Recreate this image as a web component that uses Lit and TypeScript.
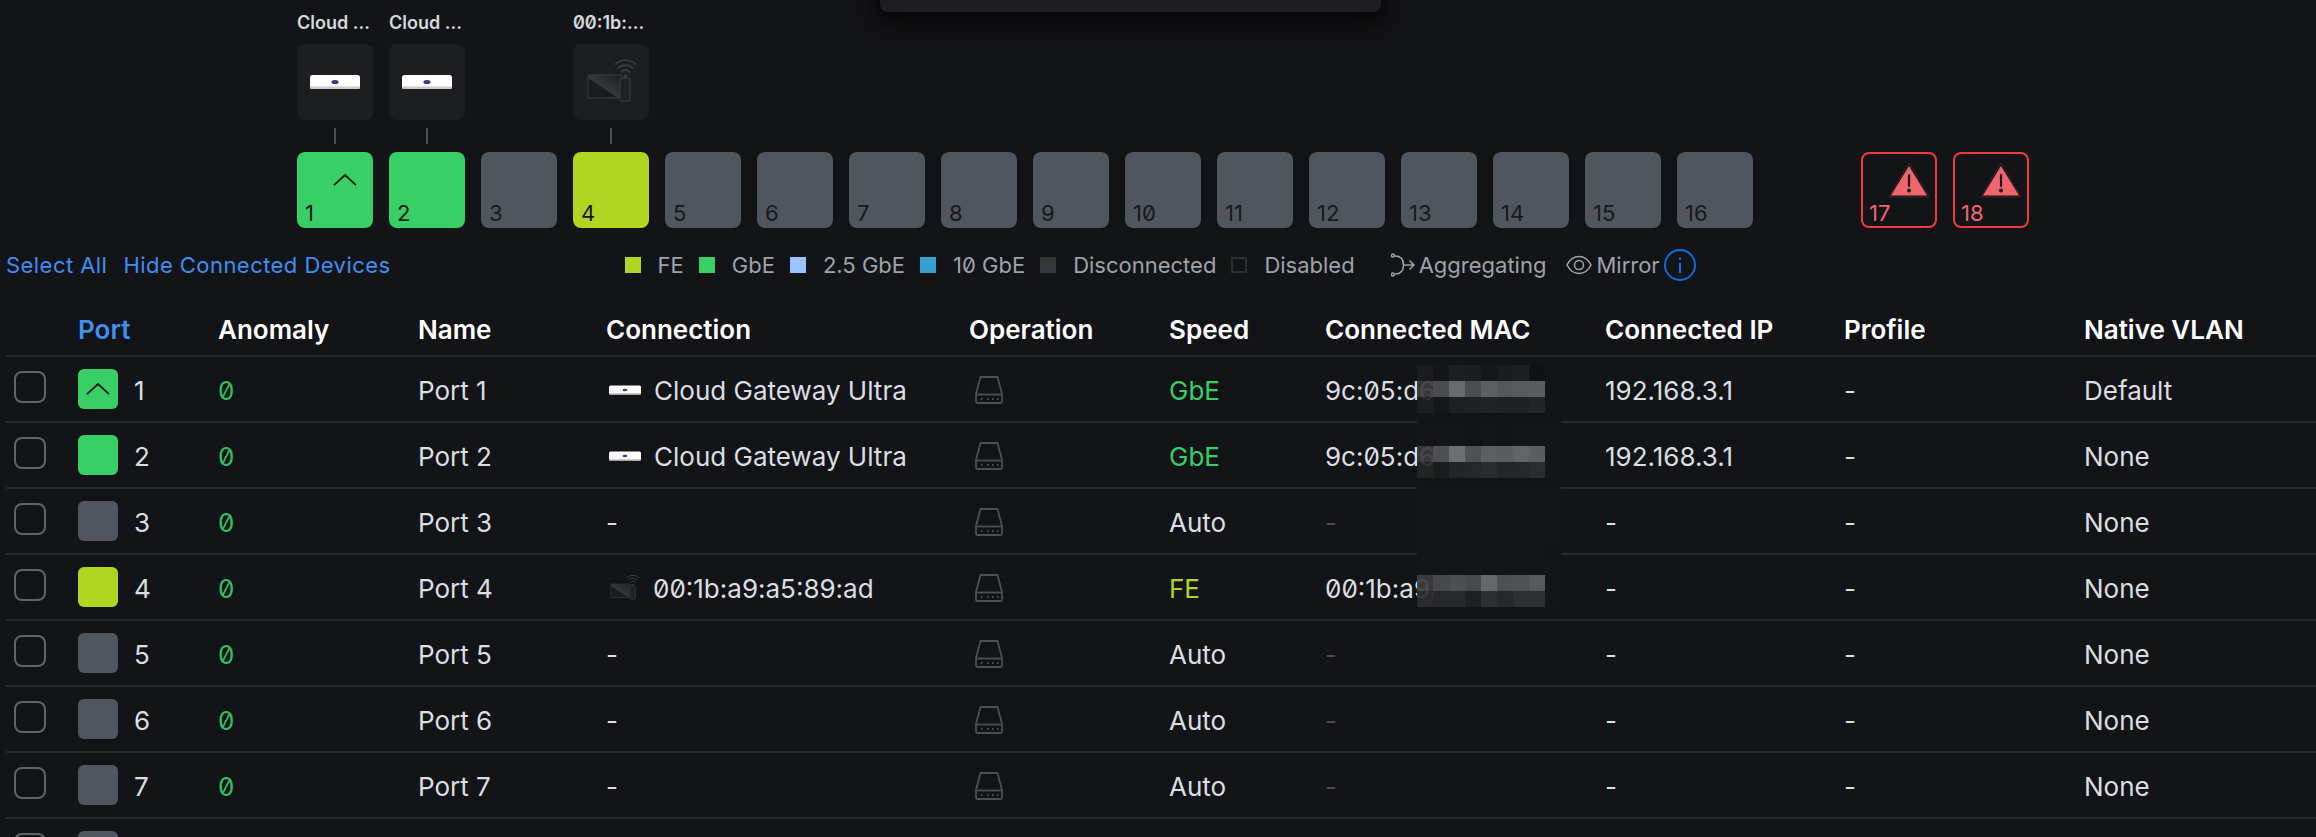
import { LitElement, html, css } from "lit";
import { customElement } from "lit/decorators.js";

const GREEN = "#37cf66", LIME = "#b1d622", GRAY = "#50565e";

const gateway = (cls: string) => html`<svg class=${cls} viewBox="0 0 50 14">
  <rect x="0" y="0" width="50" height="14" rx="2.5" fill="#fdfdfd"/>
  <rect x="0" y="11.5" width="50" height="2.5" rx="1.2" fill="#c9cacd"/>
  <ellipse cx="25" cy="7" rx="3.6" ry="2" fill="#3b3a78"/>
</svg>`;

const wifiCam = (cls: string) => html`<svg class=${cls} viewBox="0 0 50 44" fill="none">
  <defs><linearGradient id="g" x1="0" y1="1" x2="1" y2="0"><stop offset="0.42" stop-color="#1a1c1f"/><stop offset="0.46" stop-color="#35383b"/><stop offset="1" stop-color="#1b1d20"/></linearGradient></defs>
  <rect x="1" y="17" width="34" height="23" rx="2" fill="url(#g)" stroke="#33363a" stroke-width="1.4"/>
  <rect x="33" y="20" width="10" height="23" rx="2" fill="#1f2124" stroke="#33363a" stroke-width="1.4"/>
  <path d="M28 6.5a15 15 0 0 1 21 0M31 10.5a10 10 0 0 1 15 0M34 14.5a5.5 5.5 0 0 1 9 0" stroke="#3a3d41" stroke-width="1.6"/>
  <circle cx="38.5" cy="18" r="1.6" fill="#3a3d41"/>
</svg>`;

const chevron = (cls: string) => html`<svg class=${cls} viewBox="0 0 24 12" fill="none"><path d="M1 11.2 12 1l11 10.2" stroke="#15171a" stroke-width="1.8"/></svg>`;

const drive = html`<svg class="drive" viewBox="0 0 28 28" fill="none" stroke="#4b5058" stroke-width="1.8">
  <path d="M5.5 1h17L27 18v7.5a1.5 1.5 0 0 1-1.5 1.5h-23A1.5 1.5 0 0 1 1 25.500V18z" stroke-linejoin="round"/>
  <path d="M1 18.500h26"/>
  <path d="M6 23h1.500M12 23h1.500M17 23h1.500M22 23h1.500" stroke-width="2"/>
</svg>`;

const alert = html`<svg class="alert" viewBox="0 0 42 36">
  <path d="M21 1 41 35H1z" fill="none" stroke="#4a2a2e" stroke-width="0.8"/>
  <path d="M21 4 39 33.500H3z" fill="#f0646e"/>
  <rect x="19.900" y="12" width="2.200" height="13" rx="1" fill="#15171a"/>
  <circle cx="21" cy="28.500" r="1.900" fill="#15171a"/>
</svg>`;

type Row = { n: number; color: string; up?: boolean; dev?: "gw" | "cam"; conn: string; speed: string; speedColor?: string; mac: string; ip: string; vlan: string };
const rows: Row[] = [
  { n: 1, color: GREEN, up: true, dev: "gw", conn: "Cloud Gateway Ultra", speed: "GbE", speedColor: "sp-green", mac: "9c:05:d6", ip: "192.168.3.1", vlan: "Default" },
  { n: 2, color: GREEN, dev: "gw", conn: "Cloud Gateway Ultra", speed: "GbE", speedColor: "sp-green", mac: "9c:05:d6", ip: "192.168.3.1", vlan: "None" },
  { n: 3, color: GRAY, conn: "-", speed: "Auto", mac: "-", ip: "-", vlan: "None" },
  { n: 4, color: LIME, dev: "cam", conn: "00:1b:a9:a5:89:ad", speed: "FE", speedColor: "sp-lime", mac: "00:1b:a9:", ip: "-", vlan: "None" },
  { n: 5, color: GRAY, conn: "-", speed: "Auto", mac: "-", ip: "-", vlan: "None" },
  { n: 6, color: GRAY, conn: "-", speed: "Auto", mac: "-", ip: "-", vlan: "None" },
  { n: 7, color: GRAY, conn: "-", speed: "Auto", mac: "-", ip: "-", vlan: "None" },
];

const topDevices: Record<number, { label: string; dev: "gw" | "cam" }> = {
  1: { label: "Cloud ...", dev: "gw" },
  2: { label: "Cloud ...", dev: "gw" },
  4: { label: "00:1b:...", dev: "cam" },
};

const e = "#141517";
const d = "#131416";
const mosaic: string[][] = [
  ["#1a1c1e", e, "#1d1f21", "#1b1d1f", "#15171a", "#191b1d", "#1c1e20", "#101114", d],
  ["rgba(60,61,63,.92)", "#4b4c4e", "#6a6b6c", "#4c4d4f", "#5e5f60", "#56575a", "#595a5c", "#5b5c5e", d],
  ["rgba(30,32,34,.92)", "#151719", "#1e2022", "#1f2123", "#212325", "#1f2123", "#1f2123", "#232527", d],
  [d, d, d, d, d, d, d, d, d],
  [e, e, e, "#121315", e, "#121315", e, e, e],
  ["rgba(58,59,61,.92)", "#4f5052", "#6e6f70", "#505153", "#5e5f61", "#5c5d5f", "#626365", "#5c5d60", e],
  ["rgba(35,37,39,.92)", "#1a1c1e", "#232527", "#252729", "#2a2c2e", "#242628", "#252729", "#2b2d31", e],
  [d, d, d, d, d, d, d, d, d],
  [e, e, e, e, e, e, e, e, e],
  [e, e, e, e, e, e, e, e, e],
  [e, e, e, e, e, e, e, e, e],
  [e, e, e, e, e, e, e, e, "#121315"],
  [e, e, e, e, e, e, e, e, e],
  ["rgba(60,61,63,.92)", "#47484a", "#4d4e50", "#48494b", "#666769", "#4f5052", "#505153", "#58595b", e],
  ["rgba(45,46,48,.92)", "#28292b", "#28292b", "#1e2022", "#2d2e30", "#27282a", "#2e2f31", "#2e2f31", e],
];

@customElement("app-root")
export class AppRoot extends LitElement {
  static styles = css`
    :host {
      display: block; position: relative; width: 2316px; height: 837px; overflow: hidden;
      background: #131417; color: #dcdee1;
      font-family: Inter, "Noto Sans", sans-serif;
      font-feature-settings: "zero" 1;
    }
    .modal {
      position: absolute; left: 880px; top: -20px; width: 501px; height: 32px;
      background: #1c1e22; border-radius: 0 0 8px 8px;
      box-shadow: 0 6px 22px 6px #060708;
    }
    .ports { display: flex; gap: 16px; padding-left: 297px; height: 228px; }
    .col { width: 76px; display: flex; flex-direction: column; justify-content: flex-end; align-items: center; }
    .col.gap { margin-left: 92px; }
    .lbl { font-size: 18px; font-weight: 600; line-height: 20px; margin-bottom: 11px; white-space: nowrap; width: 76px; color: #d6d8db; }
    .devbox { width: 76px; height: 76px; border-radius: 8px; background: #1c1e22; display: flex; align-items: center; justify-content: center; }
    .gw-lg { width: 50px; height: 14px; }
    .cam-lg { width: 50px; height: 44px; margin-top: -4px; margin-left: 2px; }
    .wire { width: 2px; height: 16px; background: #4b5058; margin: 8px 0; }
    .port { position: relative; width: 76px; height: 76px; box-sizing: border-box; border-radius: 8px; }
    .port.alarm { background: transparent; border: 2px solid #f03a3e; }
    .num { position: absolute; left: 8px; bottom: 2px; font-size: 22px; line-height: 26px; color: #17191c; }
    .alarm .num { left: 6px; bottom: 0; color: #f0646e; }
    .chev-lg { position: absolute; left: 36px; top: 22px; width: 24px; height: 12px; }
    .alert { position: absolute; left: 25px; top: 8px; width: 42px; height: 36px; }
    .bar { display: flex; align-items: center; height: 32px; margin-top: 21px; padding-left: 6px; font-size: 22px; }
    .link { color: #3f8ef0; letter-spacing: 0.45px; }
    .link + .link { margin-left: 16px; }
    .legend { display: flex; align-items: center; margin-left: 234px; color: #9ea3ab; }
    .sw { width: 16px; height: 16px; margin-right: 17px; box-sizing: border-box; }
    .li { display: flex; align-items: center; margin-right: 15px; }
    .sw.off { border: 2px solid #2c2e33; }
    .agg { display: flex; align-items: center; margin-left: 21px; gap: 4px; color: #9ea3ab; }
    .agg svg { display: block; }
    .mir { margin-left: 20px; }
    .info { width: 32px; height: 32px; margin-left: 4px; }
    .row {
      display: grid; align-items: center; margin-left: 6px; padding-top: 2px;
      grid-template-columns: 72px 140px 200px 188px 363px 200px 156px 280px 239px 240px 1fr;
      height: 66px; box-sizing: border-box; border-bottom: 2px solid #25272b;
      font-size: 26px; color: #dcdee1;
    }
    .row.head { height: 76px; padding-top: 22px; font-weight: 600; color: #fff; }
    .row.head .act { color: #3f8ef0; }
    .chk { width: 32px; height: 32px; margin-left: 8px; margin-bottom: 6px; box-sizing: border-box; border: 2px solid #5f646c; border-radius: 8px; }
    .pc { display: flex; align-items: center; gap: 16px; }
    .sq { width: 40px; height: 40px; margin-top: -2px; border-radius: 6px; display: flex; align-items: center; justify-content: center; }
    .chev-sm { width: 24px; height: 12px; }
    .anom { color: #2fbf5f; }
    .conn { display: flex; align-items: center; gap: 13px; }
    .gw-sm { width: 32px; height: 10px; margin-left: 3px; }
    .cam-sm { width: 30px; height: 26px; margin-left: 4px; margin-top: -3px; }
    .drive { width: 28px; height: 28px; margin-left: 6px; display: block; }
    .sp-green { color: ${css([GREEN] as any)}; }
    .sp-lime { color: ${css([LIME] as any)}; }
    .dim { color: #4a4d52; }
    .mac { white-space: nowrap; }
    .blur { position: absolute; left: 1417px; top: 365px; display: grid; grid-template-columns: repeat(9, 16px); grid-auto-rows: 16.15px; }
  `;

  private cell(d?: "gw" | "cam") {
    return d === "gw" ? gateway("gw-sm") : d === "cam" ? wifiCam("cam-sm") : "";
  }

  render() {
    const legend: [string, string][] = [[LIME, "FE"], [GREEN, "GbE"], ["#99c4ff", "2.5 GbE"], ["#38a0cf", "10 GbE"], ["#33363b", "Disconnected"]];
    return html`
      <div class="ports">
        ${Array.from({ length: 16 }, (_, i) => i + 1).map((n) => {
          const t = topDevices[n];
          const bg = n <= 2 ? GREEN : n === 4 ? LIME : GRAY;
          return html`<div class="col">
            ${t ? html`<div class="lbl">${t.label}</div>
              <div class="devbox">${t.dev === "gw" ? gateway("gw-lg") : wifiCam("cam-lg")}</div>
              <div class="wire"></div>` : ""}
            <div class="port" style="background:${bg}">
              ${n === 1 ? chevron("chev-lg") : ""}
              <span class="num">${n}</span>
            </div>
          </div>`;
        })}
        ${[17, 18].map((n) => html`<div class="col ${n === 17 ? "gap" : ""}">
          <div class="port alarm">${alert}<span class="num">${n}</span></div>
        </div>`)}
      </div>

      <div class="bar">
        <span class="link">Select All</span>
        <span class="link">Hide Connected Devices</span>
        <div class="legend">
          ${legend.map(([c, t]) => html`<div class="li"><span class="sw" style="background:${c}"></span>${t}</div>`)}
          <div class="li"><span class="sw off"></span>Disabled</div>
        </div>
        <div class="agg">
          <svg width="24" height="24" viewBox="0 0 24 24" fill="none" stroke="#9ea3ab" stroke-width="1.5">
            <circle cx="1.800" cy="2.500" r="1.500"/><circle cx="1.800" cy="21.500" r="1.500"/>
            <path d="M4 3c6 0 8.500 3 8.500 9s-2.500 9-8.500 9M12.500 12H23M18.500 7.500 23 12l-4.500 4.500"/>
          </svg>
          <span>Aggregating</span>
        </div>
        <div class="agg mir">
          <svg width="26" height="20" viewBox="0 0 26 20" fill="none" stroke="#9ea3ab" stroke-width="1.5">
            <path d="M1 10C4 4 8 1.500 13 1.500S22 4 25 10c-3 6-7 8.500-12 8.500S4 16 1 10z"/><circle cx="13" cy="10" r="4.500"/>
          </svg>
          <span>Mirror</span>
        </div>
        <svg class="info" viewBox="0 0 32 32" fill="none">
          <circle cx="16" cy="16" r="15" stroke="#0b6fe8" stroke-width="1.800"/>
          <rect x="15" y="14" width="2" height="10" fill="#0b6fe8"/><rect x="15" y="8.500" width="2" height="2.500" fill="#0b6fe8"/>
        </svg>
      </div>

      <div class="row head">
        <span></span><span class="act">Port</span><span>Anomaly</span><span>Name</span><span>Connection</span><span>Operation</span><span>Speed</span><span>Connected MAC</span><span>Connected IP</span><span>Profile</span><span>Native VLAN</span>
      </div>
      ${rows.map((r) => html`<div class="row">
        <div class="chk"></div>
        <div class="pc"><div class="sq" style="background:${r.color}">${r.up ? chevron("chev-sm") : ""}</div>${r.n}</div>
        <div class="anom">0</div>
        <div>Port ${r.n}</div>
        <div class="conn">${this.cell(r.dev)}${r.conn}</div>
        <div>${drive}</div>
        <div class=${r.speedColor ?? ""}>${r.speed}</div>
        <div class="mac ${r.mac === "-" ? "dim" : ""}">${r.mac}</div>
        <div>${r.ip}</div>
        <div>-</div>
        <div>${r.vlan}</div>
      </div>`)}
      <div class="row">
        <div class="chk"></div>
        <div class="pc"><div class="sq" style="background:${GRAY}"></div></div>
      </div>

      <div class="blur">${mosaic.flat().map((c) => html`<i style="background:${c}"></i>`)}</div>
      <div class="modal"></div>
    `;
  }
}
